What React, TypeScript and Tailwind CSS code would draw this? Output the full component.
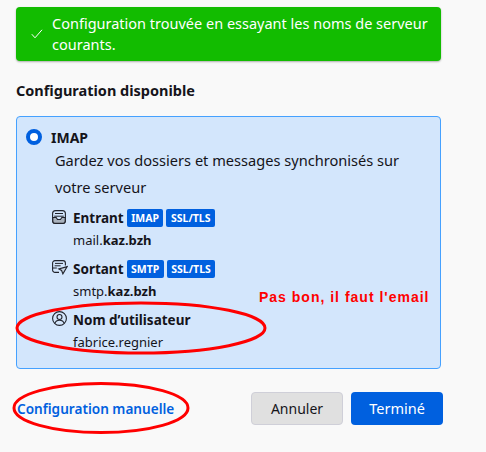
import React from 'react';

const font = { fontFamily: '"Noto Sans", sans-serif' };

function Badge({ children }: { children: React.ReactNode }) {
  return (
    <span className="h-[18px] px-[4.5px] flex items-center rounded-[2px] bg-[#0060df] text-white text-[10.5px] font-bold leading-none">
      {children}
    </span>
  );
}

function InboxIcon() {
  return (
    <svg width="14" height="14" viewBox="0 0 14 14" fill="none" stroke="#20232b" strokeWidth="1.1">
      <rect x="0.6" y="0.6" width="12.8" height="12.8" rx="3" />
      <path d="M3 3.5h8M2.2 6.2h9.6" strokeWidth="1" />
      <path d="M0.8 7.5h3.4l1.3 2h3l1.3-2h3.4V11a2.4 2.4 0 0 1-2.4 2.4H3.2A2.4 2.4 0 0 1 .8 11z" fill="#a9b2bd" />
    </svg>
  );
}

function OutboxIcon() {
  return (
    <svg width="16" height="15" viewBox="0 0 16 15" fill="none" stroke="#20232b" strokeWidth="1.1">
      <path d="M7 12.4H3a2.4 2.4 0 0 1-2.4-2.4V3A2.4 2.4 0 0 1 3 .6h8A2.4 2.4 0 0 1 13.4 3v2.5" />
      <path d="M3 3.4h8M2.6 5.8h6M.8 8h4" strokeWidth="1" />
      <path d="M15.2 6.6 6.8 9l2.8 1.5 1.3 3.4z" fill="#c7d4e2" />
    </svg>
  );
}

function UserIcon() {
  return (
    <svg width="15" height="15" viewBox="0 0 15 15" fill="none" stroke="#20232b" strokeWidth="1.1">
      <circle cx="7.5" cy="7.5" r="6.9" />
      <circle cx="7.5" cy="6" r="2.5" />
      <path d="M3 12.2c.5-2 2.3-3 4.5-3s4 1 4.5 3" />
    </svg>
  );
}

function Server({ icon, label, badges, host }: { icon: React.ReactNode; label: string; badges: string[]; host: string }) {
  return (
    <div className="ml-[35px] h-[51px]">
      <div className="flex items-center h-[24px]">
        <span className="w-[21px] flex shrink-0 -mt-[3px]">{icon}</span>
        <span className="text-[13.5px] font-bold text-[#15141a] mr-[3px]">{label}</span>
        <span className="flex gap-[3px]">
          {badges.map((b) => (
            <Badge key={b}>{b}</Badge>
          ))}
        </span>
      </div>
      <div className="ml-[21px] h-[22px] flex items-center text-[13px] text-[#15141a]">
        {host.split('.')[0]}.<b>kaz.bzh</b>
      </div>
    </div>
  );
}

export default function App() {
  return (
    <div className="relative w-[486px] h-[452px] overflow-hidden bg-[#f9f9f9] pt-[7px] pl-[16px]" style={font}>
      {/* success banner */}
      <div className="w-[425px] h-[54px] rounded-[4px] bg-[#12bc00] shadow-[0_1px_2px_rgba(0,0,0,0.3)] flex items-center text-white">
        <svg className="ml-[15px] mr-[9px] shrink-0" width="12" height="10" viewBox="0 0 12 10" fill="none" stroke="#fff" strokeWidth="1">
          <path d="M.8 5.2 4 8.8 11 .8" />
        </svg>
        <p className="text-[14.5px] leading-[21px] -mt-px">Configuration trouvée en essayant les noms de serveur courants.</p>
      </div>

      <h2 className="mt-[20px] h-[20px] flex items-center text-[14.5px] font-bold text-[#15141a]">Configuration disponible</h2>

      {/* protocol card */}
      <div className="mt-[15px] w-[425px] h-[253px] rounded-[4px] border border-[#45a1ff] bg-[#d3e6fc] pt-[10px]">
        <div className="flex items-center h-[20px] ml-[9px]">
          <span className="w-[16px] h-[16px] rounded-full border-[4px] border-[#0060df] bg-white" />
          <span className="ml-[9px] text-[14px] font-bold text-[#15141a]">IMAP</span>
        </div>
        <p className="ml-[38px] w-[360px] text-[14.6px] leading-[27px] text-[#15141a]">
          Gardez vos dossiers et messages synchronisés sur votre serveur
        </p>
        <div className="mt-[5px]">
          <Server icon={<InboxIcon />} label="Entrant" badges={['IMAP', 'SSL/TLS']} host="mail.kaz.bzh" />
          <Server icon={<OutboxIcon />} label="Sortant" badges={['SMTP', 'SSL/TLS']} host="smtp.kaz.bzh" />
          <div className="ml-[35px]">
            <div className="flex items-center h-[24px]">
              <span className="w-[21px] flex shrink-0 -mt-[3px]"><UserIcon /></span>
              <span className="text-[13.5px] font-bold text-[#15141a]">Nom d’utilisateur</span>
            </div>
            <div className="ml-[21px] h-[21px] flex items-center text-[13px] text-[#15141a]">fabrice.regnier</div>
          </div>
        </div>
      </div>

      {/* footer */}
      <div className="mt-[23px] w-[427px] h-[33px] flex items-center">
        <a className="ml-px mt-px text-[13.6px] font-semibold text-[#0060df]">Configuration manuelle</a>
        <button className="ml-auto w-[92px] h-[33px] rounded-[4px] border border-[#cfcfd8] bg-[#e0e0e0] text-[14px] text-[#15141a]">Annuler</button>
        <button className="ml-[8px] w-[92px] h-[33px] rounded-[4px] bg-[#0060df] text-[14.5px] text-white">Terminé</button>
      </div>

      {/* annotations drawn on top of the screenshot */}
      <span
        className="absolute left-[259px] top-[288px] text-[14px] font-bold leading-[18px] text-[#ff0000] tracking-[1px]"
        style={{ fontFamily: '"Liberation Sans", sans-serif' }}
      >
        Pas bon, il faut l'email
      </span>
      <svg className="absolute left-0 top-0 pointer-events-none" width="486" height="452" fill="none" stroke="#ff0000" strokeWidth="3">
        <ellipse cx="141" cy="328" rx="124" ry="25" />
        <ellipse cx="101" cy="408" rx="87" ry="24.5" />
      </svg>
    </div>
  );
}
